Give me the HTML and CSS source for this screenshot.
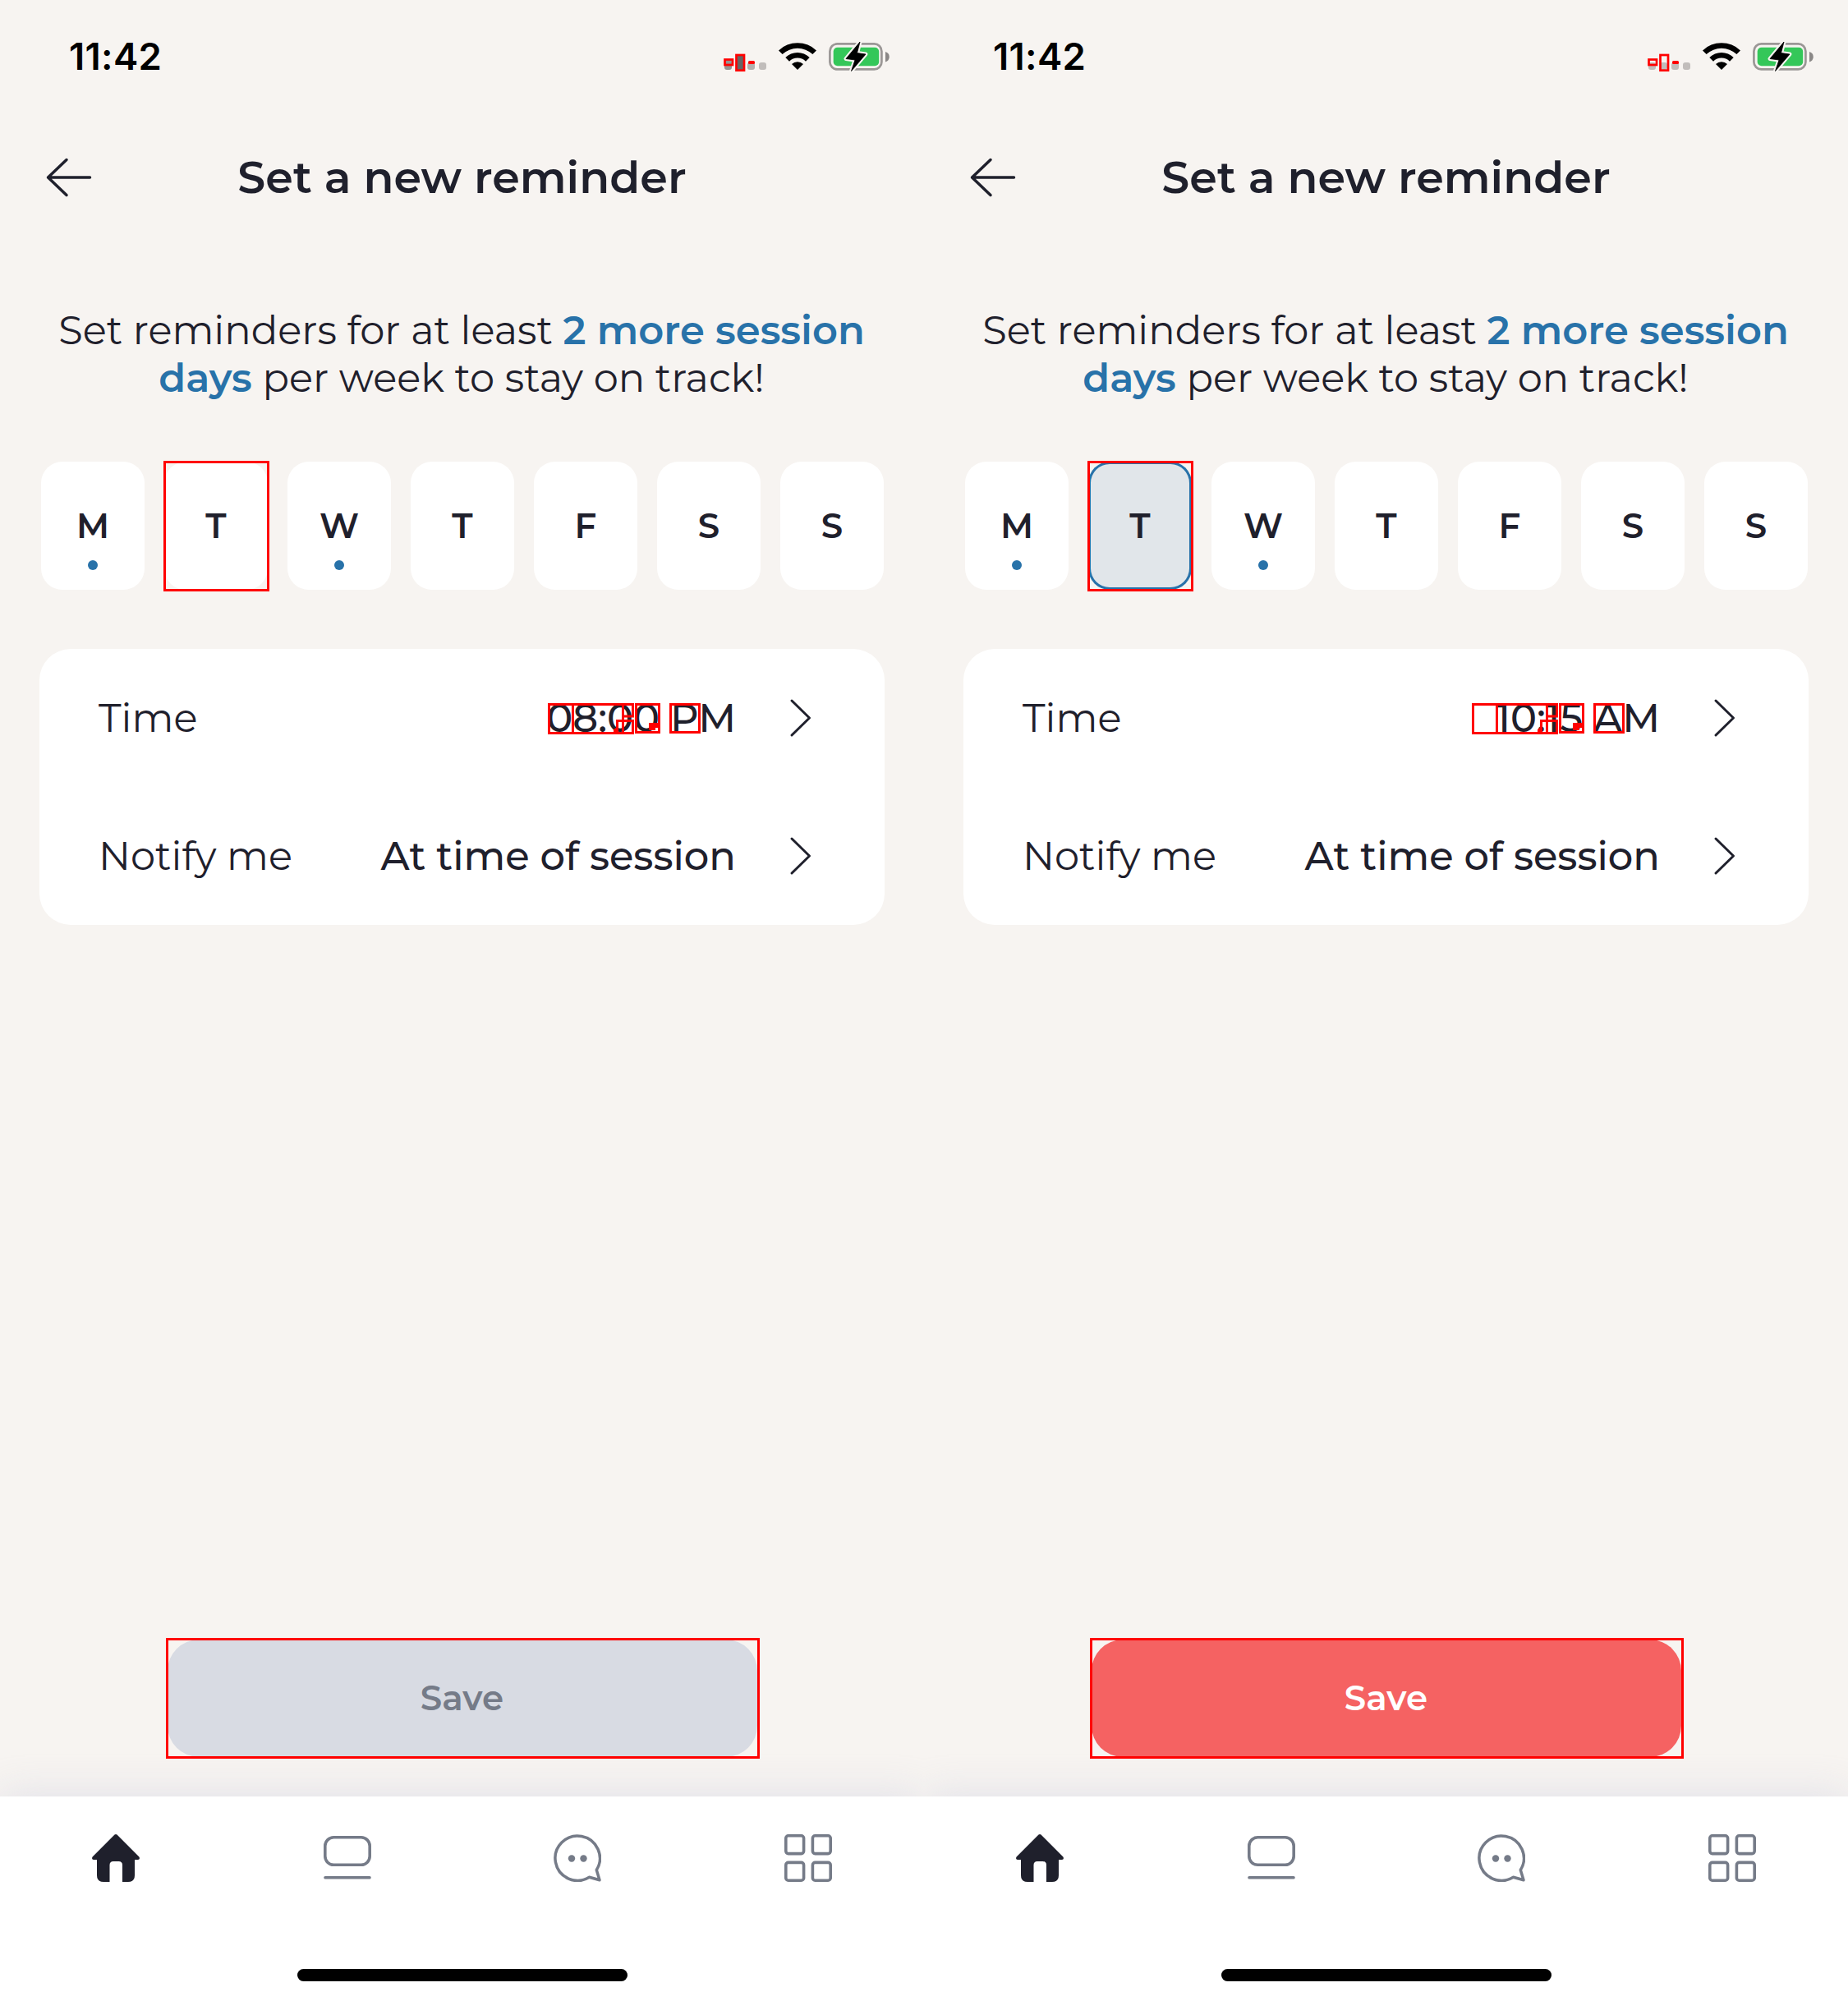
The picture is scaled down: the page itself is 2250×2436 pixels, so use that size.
FILE: index.html
```html
<!DOCTYPE html>
<html lang="en">
<head>
<meta charset="utf-8">
<title>Set a new reminder</title>
<link rel="stylesheet" href="styles.css">
</head>
<body>
<svg width="0" height="0" class="defs" aria-hidden="true">
  <defs>
    <symbol id="status" viewBox="0 0 134 36" overflow="visible">
      <path d="M0 10.400a33.400 33.400 0 0 1 46 0l-4.600 4.700a26.800 26.800 0 0 0-36.800 0z"/>
      <path d="M8.300 19a21 21 0 0 1 29.400 0l-4.700 4.700a14.300 14.300 0 0 0-20 0z"/>
      <path d="M16 27a10.500 10.500 0 0 1 14 0l-7 7z"/>
      <rect x="62.400" y="2.400" width="63" height="31" rx="9" fill="none" stroke="#9b9796" stroke-width="2.700"/>
      <path d="M130 12a6.500 6.500 0 0 1 0 12.500z" fill="#8a8786"/>
      <rect x="66.700" y="6.700" width="55.500" height="22.500" rx="5" fill="#34c759"/>
      <path d="M99 0L82 20.500l11 1.500-4.500 13.500L106 15l-10.500-1.500z" stroke="#f7f4f1" stroke-width="5" stroke-linejoin="round" fill="#f7f4f1"/>
      <path d="M99 0L82 20.500l11 1.500-4.500 13.500L106 15l-10.500-1.500z" stroke="#000" stroke-width=".8" stroke-linejoin="round"/>
    </symbol>
    <symbol id="back" viewBox="0 0 56 48"><path d="M53.500 24H3M25 2.500L2.500 24 25 45.500" fill="none" stroke="#1f202c" stroke-width="3.500" stroke-linecap="round" stroke-linejoin="round"/></symbol>
    <symbol id="chevron" viewBox="0 0 28 48"><path d="M3 3l21.500 21L3 45" fill="none" stroke="#1f202c" stroke-width="3" stroke-linecap="round" stroke-linejoin="round"/></symbol>
    <symbol id="home" viewBox="0 0 58 58"><path d="M27.500 .6Q29-.6 30.500 .6L57.400 27.500Q59 30.500 56 31H52V50Q52 58 44 58H37V37.500Q37 33 32.500 33H26Q21.500 33 21.500 37.500V58H14Q6 58 6 50V31H2Q-1 30.500 .6 27.500Z" fill="#1f202c"/></symbol>
    <symbol id="screen" viewBox="0 0 58 58" overflow="visible"><g fill="none" stroke="#757b88" stroke-width="3.600" stroke-linecap="round" transform="translate(1 0)"><rect x="1.800" y="3.800" width="54.400" height="33.500" rx="10.500"/><path d="M2 52.800H56"/></g></symbol>
    <symbol id="chat" viewBox="0 0 58 58"><path d="M52.300 43.500A27.200 27.200 0 1 0 43.500 52.300L56 55.800Z" fill="none" stroke="#757b88" stroke-width="3.500" stroke-linejoin="round"/><circle cx="22" cy="29.500" r="4.200" fill="#757b88"/><circle cx="36.500" cy="29.500" r="4.200" fill="#757b88"/></symbol>
    <symbol id="grid" viewBox="0 0 58 58"><g fill="none" stroke="#757b88" stroke-width="3.600"><rect x="1.800" y="1.800" width="21.800" height="21.800" rx="3"/><rect x="34.400" y="1.800" width="21.800" height="21.800" rx="3"/><rect x="1.800" y="34.400" width="21.800" height="21.800" rx="3"/><rect x="34.400" y="34.400" width="21.800" height="21.800" rx="3"/></g></symbol>
    <symbol id="marks" viewBox="0 0 1125 2436">
      <g fill="none" stroke="#f00" stroke-width="2.700">
        <rect x="882.500" y="72.500" width="9.500" height="6.500"/><rect x="896.500" y="67" width="9.500" height="18.700"/>
      </g>
      <rect x="911" y="74" width="8" height="4" rx="1.500" fill="#f00"/>
      <g fill="none" stroke="#f00" stroke-width="3">
        <rect x="200.500" y="562.500" width="126" height="156"/>
        <rect x="203.500" y="1995.500" width="720" height="144"/>
        <rect x="668.500" y="857.500" width="29" height="35"/>
        <path d="M697.500 857.500H770.500V872H758.500M758.500 857.500V892.500M697.500 892.500H770.500V877.500H751.500V892.500"/>
        <rect x="774.500" y="857.500" width="28" height="34"/>
        <rect x="816.500" y="857.500" width="35" height="34"/>
      </g>
      <path d="M747 893V888L750 886V893ZM790 880H802V886H798V889H790Z" fill="#f00"/>
    </symbol>
  </defs>
</svg>

<main class="screens">
  <section class="phone">
    <div class="status-bar">
      <span class="clock">11:42</span>
      <span class="signal"><i class="dim3"></i><i class="strong"></i><i class="dim2"></i><i class="dim1"></i></span>
      <svg class="status-icons"><use href="#status"/></svg>
    </div>
    <header class="header"><svg class="back"><use href="#back"/></svg><h1>Set a new reminder</h1></header>
    <p class="hint">Set reminders for at least <b>2 more session</b><br><b>days</b> per week to stay on track!</p>
    <div class="days">
      <div class="day planned">M</div><div class="day">T</div><div class="day planned">W</div><div class="day">T</div><div class="day">F</div><div class="day">S</div><div class="day">S</div>
    </div>
    <div class="card">
      <div class="row"><span>Time</span><span class="value">08:00 PM</span><svg class="chevron"><use href="#chevron"/></svg></div>
      <div class="row"><span>Notify me</span><span class="value">At time of session</span><svg class="chevron"><use href="#chevron"/></svg></div>
    </div>
    <button class="save disabled">Save</button>
    <nav class="tabs">
      <div class="tab-row"><svg><use href="#home"/></svg><svg><use href="#screen"/></svg><svg><use href="#chat"/></svg><svg><use href="#grid"/></svg></div>
      <div class="home-indicator"></div>
    </nav>
    <svg class="overlay"><use href="#marks"/></svg>
  </section>

  <section class="phone">
    <div class="status-bar">
      <span class="clock">11:42</span>
      <span class="signal"><i></i><i></i><i></i><i></i></span>
      <svg class="status-icons"><use href="#status"/></svg>
    </div>
    <header class="header"><svg class="back"><use href="#back"/></svg><h1>Set a new reminder</h1></header>
    <p class="hint">Set reminders for at least <b>2 more session</b><br><b>days</b> per week to stay on track!</p>
    <div class="days">
      <div class="day planned">M</div><div class="day selected">T</div><div class="day planned">W</div><div class="day">T</div><div class="day">F</div><div class="day">S</div><div class="day">S</div>
    </div>
    <div class="card">
      <div class="row"><span>Time</span><span class="value">10:15 AM</span><svg class="chevron"><use href="#chevron"/></svg></div>
      <div class="row"><span>Notify me</span><span class="value">At time of session</span><svg class="chevron"><use href="#chevron"/></svg></div>
    </div>
    <button class="save">Save</button>
    <nav class="tabs">
      <div class="tab-row"><svg><use href="#home"/></svg><svg><use href="#screen"/></svg><svg><use href="#chat"/></svg><svg><use href="#grid"/></svg></div>
      <div class="home-indicator"></div>
    </nav>
    <svg class="overlay"><use href="#marks"/></svg>
  </section>
</main>
</body>
</html>
```
FILE: styles.css
```css
* { box-sizing: border-box; }
body { margin: 0; background: #f7f4f1; color: #1f202c; font-family: Montserrat, Inter, sans-serif; }
.defs { position: absolute; }
.screens { display: flex; width: 2250px; height: 2436px; }
.phone { position: relative; width: 1125px; height: 2436px; display: flex; flex-direction: column; overflow: hidden; }

.status-bar { height: 138px; padding: 0 43px 0 84px; display: flex; align-items: center; }
.clock { flex: 1; font: 600 45.500px/60px Inter, sans-serif; letter-spacing: .3px; color: #000; }
.signal { display: flex; align-items: flex-end; gap: 5px; height: 20px; margin-right: 15px; margin-top: 12px; }
.signal i { width: 9px; height: 9px; border-radius: 3px; background: #c1bdbb; }
.signal .dim3 { height: 13px; background: #969392; }
.signal .strong { height: 19px; background: #666; border-radius: 0; }
.signal .dim2 { background: #b3afad; }
.status-icons { width: 134px; height: 36px; overflow: visible; }

.header { height: 156px; display: flex; align-items: center; justify-content: center; position: relative; }
.back { position: absolute; left: 56px; top: 54px; width: 56px; height: 48px; }
h1 { margin: 0; font-size: 54px; font-weight: 600; line-height: 60px; }

.hint { margin: 79px 0 0; height: 117px; padding-right: 1px; font-size: 48px; line-height: 58px; text-align: center; white-space: nowrap; }
.hint b { color: #2872a9; font-weight: 600; }

.days { display: flex; gap: 24px; margin: 72px 0 0 50px; }
.day { width: 126px; height: 156px; border-radius: 26px; background: #fff; display: flex; flex-direction: column; align-items: center; padding-top: 54px; font-size: 42px; font-weight: 600; line-height: 48px; }
.planned::after { content: ""; width: 12px; height: 12px; border-radius: 50%; background: #2872a9; margin-top: 18px; }
.selected { background: #e1e6ea; box-shadow: inset 0 0 0 3px #2872a9; }

.card { margin: 72px 48px 0; height: 336px; border-radius: 38px; background: #fff; }
.row { height: 168px; padding: 0 88px 0 72px; display: flex; align-items: center; font-size: 48px; }
.value { margin-left: auto; font-weight: 500; }
.chevron { width: 28px; height: 48px; margin-left: 65px; }

.save { margin: 870px auto 0; width: 718px; height: 143px; padding: 0 0 2px; border: 0; border-radius: 38px; background: #f56262; color: #fff; font: 600 42px/48px Montserrat, Inter, sans-serif; flex: none; }
.disabled { background: #d8dbe3; color: #757b88; }

.tabs { margin-top: 48px; height: 249px; background: #fff; box-shadow: 0 0 48px rgba(210, 212, 228, .65); display: flex; flex-direction: column; align-items: center; flex: none; }
.tab-row { display: flex; justify-content: space-between; width: 100%; padding: 46px 112px 0; }
.tab-row svg { width: 58px; height: 58px; overflow: visible; }
.home-indicator { margin-top: 106px; width: 402px; height: 15px; border-radius: 8px; background: #000; }
.overlay { position: absolute; left: 0; top: 0; width: 1125px; height: 2436px; pointer-events: none; }
```
